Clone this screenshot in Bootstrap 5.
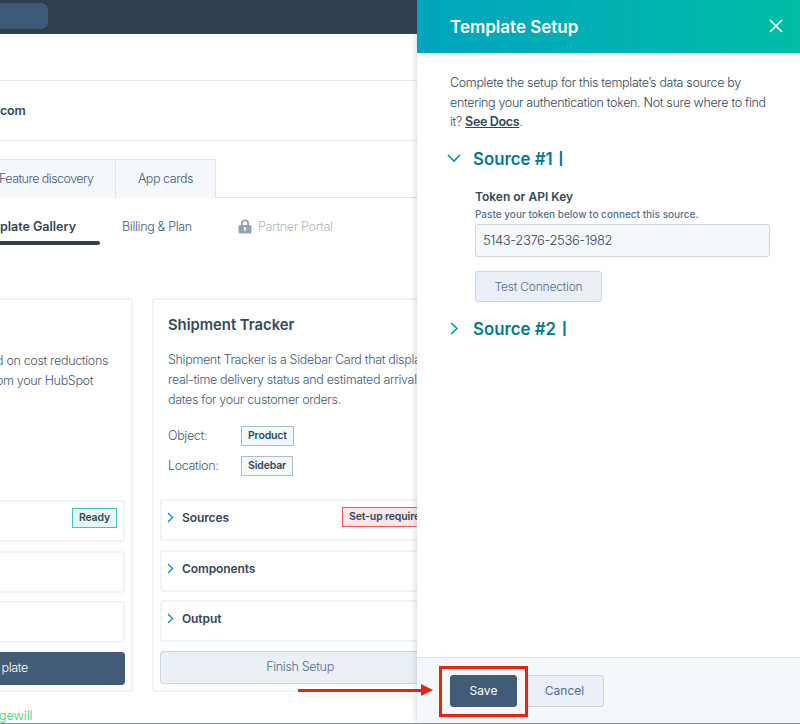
<!DOCTYPE html>
<html lang="en">
<head>
<meta charset="utf-8">
<title>Template Setup</title>
<link rel="stylesheet" href="https://cdn.jsdelivr.net/npm/bootstrap@5.3.0/dist/css/bootstrap.min.css">
<style>
html,body{height:724px;overflow:hidden}
body{font-family:Inter,"Liberation Sans",sans-serif;font-size:13px;font-weight:300;color:#33475b;background:#fff;position:relative;border-bottom:1px solid #8a8f94}
.topbar{height:34px;background:#2e3f50;padding-top:3px}
.top-pill{width:48px;height:26px;background:#3f5a78;border-radius:0 7px 7px 0}
.rule-row{border-bottom:1px solid #e5eaf1}
.row-a{height:47px}
.row-b{height:60px;font-weight:600;font-size:12.5px;letter-spacing:-.2px;color:#33475b;line-height:59px}
.tabline{margin-top:18px;height:39px;border-bottom:1px solid #dfe3eb}
.tabish{height:39px;background:#f5f8fa;border:1px solid #dfe3eb;border-bottom:0;line-height:38px;text-align:center;color:#425b76;font-size:12.5px;letter-spacing:-.45px;white-space:nowrap}
.tab-a{width:116px;margin-left:-1px;text-align:left;border-left:0;border-right:0;letter-spacing:-.55px}
.tab-b{width:101px}
.subnav{height:48px;position:relative}
.subnav span{position:absolute;top:20px;font-size:12.5px;letter-spacing:-.33px;line-height:18px;color:#425b76;white-space:nowrap}
.subnav .now{left:-26px;font-weight:600;letter-spacing:0;color:#33475b}
.subnav .bill{left:122px}
.subnav .off{left:258px;color:#a9b8c9}
.subnav svg{position:absolute;left:238px;top:21px}
.subnav i{position:absolute;left:-30px;width:130px;top:43px;height:4px;background:#2e3f50;border-radius:2px}
.deck{margin-top:52px;margin-left:-163px;gap:19px}
.tcard{width:296px;height:394px;border:2px solid #f0f3f7;border-radius:3px;padding:0 6px;flex:none;letter-spacing:-.33px}
.tname{font-size:14.8px;font-weight:600;letter-spacing:0;color:#33475b;margin:15px 0 0 8px;height:20px;line-height:20px}
.tdesc{margin:15px 0 0 8px;line-height:19.8px;font-size:12.5px;color:#425b76;height:59px;width:400px;white-space:nowrap}
.tdesc-far{margin-left:151px;margin-top:51px;height:59px;line-height:19.6px;font-size:12.5px;color:#425b76;white-space:nowrap}
.meta{display:flex;align-items:center;height:20px;margin:0 0 10px 8px;color:#425b76;font-size:12.5px}
.meta-first{margin-top:17px}
.meta span:first-child{width:73px}
.tagbox{border:1px solid #a9bdd3;background:#f5f8fa;color:#33475b;font-weight:600;font-size:10.5px;letter-spacing:-.15px;height:20px;line-height:18px;padding:0 6px}
.fold{height:42px;border:2px solid #f0f3f7;border-radius:3px;margin-bottom:8.5px;position:relative;padding:8px 0 0 20px;font-weight:600;font-size:12px;letter-spacing:-.1px;color:#33475b;line-height:18px;background:#fff}
.fold-first{margin-top:23px}
.fold-left{margin-top:90px}
.fold svg{position:absolute;left:5px;top:11px}
.fold .tagbox{position:absolute;top:6px;white-space:nowrap}
.okay{right:6px;background:#e5f8f6;border-color:#45c4b4}
.need{left:180px;background:#fde8e9;border-color:#f2545b}
.bigbtn{height:33px;width:100%;margin-top:9px;border-radius:3px;font-size:12.5px;letter-spacing:-.33px;padding:0;font-weight:300;display:block}
.plate-end{padding-right:96px;text-align:right}
.dark-btn{background:#425b76;border:1px solid #425b76;color:#fff}
.pale-btn{background:#eaf0f6;border:1px solid #cbd6e2;color:#506e91}
.signoff{margin:16px 0 0 -1px;color:#2fd16f;font-size:12.5px;line-height:16px}
.sidepanel{position:absolute;top:0;right:0;bottom:0;width:383px;background:#fff;box-shadow:0 0 7px rgba(60,80,100,.28);display:flex;flex-direction:column}
.panel-head{height:53px;background:linear-gradient(90deg,#00a4bd,#00bda5);color:#fff;padding:1px 17px 0 33px;flex:none}
.panel-head h1{font-size:17px;font-weight:600;margin:0}
.panel-head svg{margin-top:-3px}
.panel-main{flex:1;padding:20px 30px 0 33px}
.panel-main p{line-height:19.6px;font-size:12.5px;letter-spacing:-.33px;margin:0;color:#33475b}
.panel-main a{color:#33475b;font-weight:600}
.src{display:flex;align-items:center;color:#00798c;font-size:16.8px;font-weight:600;line-height:24px}
.src svg{width:14px;margin-left:-3px;margin-right:12px}
.src em{font-style:normal;font-size:12.5px;font-weight:800;margin-left:6px}
.src-one{margin-top:15px}
.src-two{margin-top:15px}
.lbl{font-size:12px;font-weight:600;margin:17px 0 0 25px;line-height:18px;color:#33475b}
.hint{font-size:10px;font-weight:500;color:#516f90;margin-left:25px;line-height:16px;height:18px}
.tokenbox{margin-left:25px;width:295px;height:33px;background:#f5f8fa;border:1px solid #cbd6e2;border-radius:3px;font-size:13px;letter-spacing:-.4px;font-weight:300;color:#33475b;padding:0 7px}
.testbtn{margin:14px 0 0 25px;width:127px;height:31px;border-radius:3px;font-size:12px;letter-spacing:-.2px;font-weight:300;padding:1px 0 0}
.panel-foot{height:66px;border-top:1px solid #dfe3eb;background:#f5f8fa;padding:17px 0 0 33px;flex:none;gap:8px}
.footbtn{height:32px;border-radius:3px;font-size:12px;font-weight:400;padding:0}
.savebtn{width:67px}
.cancelbtn{width:79px}
.callout-box{position:absolute;left:439px;top:666px;width:89px;height:51px;border:3px solid #e8240a}
.callout-line{position:absolute;left:298px;top:689px;width:124px;height:3px;background:#e8240a}
.callout-tip{position:absolute;left:421px;top:684px;width:0;height:0;border-left:12px solid #e8240a;border-top:6.5px solid transparent;border-bottom:6.5px solid transparent}
.fold + .bigbtn{margin-top:.5px}
</style>
</head>
<body>
<div class="topbar"><div class="top-pill"></div></div>
<div class="rule-row row-a"></div>
<div class="rule-row row-b">com</div>
<div class="tabline d-flex">
  <div class="tabish tab-a">Feature discovery</div>
  <div class="tabish tab-b">App cards</div>
</div>
<div class="subnav">
  <span class="now">Template Gallery</span><i></i>
  <span class="bill">Billing &amp; Plan</span>
  <svg width="14" height="15" viewBox="0 0 14 15"><path fill="#8fa3b8" d="M3 6V4.500a4 4 0 0 1 8 0V6h1a1.500 1.500 0 0 1 1.500 1.500V13a1.500 1.500 0 0 1-1.500 1.500H2A1.500 1.500 0 0 1 .5 13V7.500A1.500 1.500 0 0 1 2 6zm1.800 0h4.400V4.500a2.200 2.200 0 0 0-4.400 0z"/><circle cx="7" cy="9.500" r="1.300" fill="#fff"/><rect x="6.400" y="9.500" width="1.200" height="2.500" fill="#fff"/></svg>
  <span class="off">Partner Portal</span>
</div>
<div class="deck d-flex">
  <div class="tcard">
    <div class="tdesc-far">d on cost reductions<br>om your HubSpot</div>
    <div class="fold fold-left"><span class="tagbox okay">Ready</span></div>
    <div class="fold"></div>
    <div class="fold"></div>
    <button class="btn bigbtn dark-btn" type="button"><span class="d-block plate-end">plate</span></button>
  </div>
  <div class="tcard">
    <div class="tname">Shipment Tracker</div>
    <div class="tdesc">Shipment Tracker is a Sidebar Card that displays<br>real-time delivery status and estimated arrival<br>dates for your customer orders.</div>
    <div class="meta meta-first"><span>Object:</span><span class="tagbox">Product</span></div>
    <div class="meta"><span>Location:</span><span class="tagbox">Sidebar</span></div>
    <div class="fold fold-first"><svg width="7" height="11" viewBox="0 0 7 11"><path d="M1 1l4.500 4.500L1 10" fill="none" stroke="#0091ae" stroke-width="1.300"/></svg>Sources<span class="tagbox need">Set-up required</span></div>
    <div class="fold"><svg width="7" height="11" viewBox="0 0 7 11"><path d="M1 1l4.500 4.500L1 10" fill="none" stroke="#0091ae" stroke-width="1.300"/></svg>Components</div>
    <div class="fold"><svg width="7" height="11" viewBox="0 0 7 11"><path d="M1 1l4.500 4.500L1 10" fill="none" stroke="#0091ae" stroke-width="1.300"/></svg>Output</div>
    <button class="btn bigbtn pale-btn" type="button">Finish Setup</button>
  </div>
</div>
<div class="signoff">gewill</div>

<aside class="sidepanel">
  <div class="panel-head d-flex align-items-center justify-content-between">
    <h1>Template Setup</h1>
    <svg width="14" height="14" viewBox="0 0 14 14"><path d="M1 1l12 12M13 1L1 13" stroke="#fff" stroke-width="1.600" fill="none"/></svg>
  </div>
  <div class="panel-main">
    <p>Complete the setup for this template’s data source by<br>entering your authentication token. Not sure where to find<br>it? <a href="#">See Docs</a>.</p>
    <div class="src src-one"><svg height="9" viewBox="0 0 14 9"><path d="M1 1l6 6 6-6" fill="none" stroke="#0091ae" stroke-width="1.600"/></svg>Source #1 <em>|</em></div>
    <div class="lbl">Token or API Key</div>
    <div class="hint">Paste your token below to connect this source.</div>
    <input class="form-control tokenbox" type="text" value="5143-2376-2536-1982">
    <button class="btn pale-btn testbtn d-block" type="button">Test Connection</button>
    <div class="src src-two"><svg height="13" viewBox="0 0 14 13"><path d="M4 1l6 5.500L4 12" fill="none" stroke="#0091ae" stroke-width="1.600"/></svg>Source #2 <em>|</em></div>
  </div>
  <div class="panel-foot d-flex">
    <button class="btn footbtn dark-btn savebtn" type="button">Save</button>
    <button class="btn footbtn pale-btn cancelbtn" type="button">Cancel</button>
  </div>
</aside>
<div class="callout-line"></div>
<div class="callout-tip"></div>
<div class="callout-box"></div>
<script src="https://cdn.jsdelivr.net/npm/bootstrap@5.3.0/dist/js/bootstrap.bundle.min.js"></script>
</body>
</html>
